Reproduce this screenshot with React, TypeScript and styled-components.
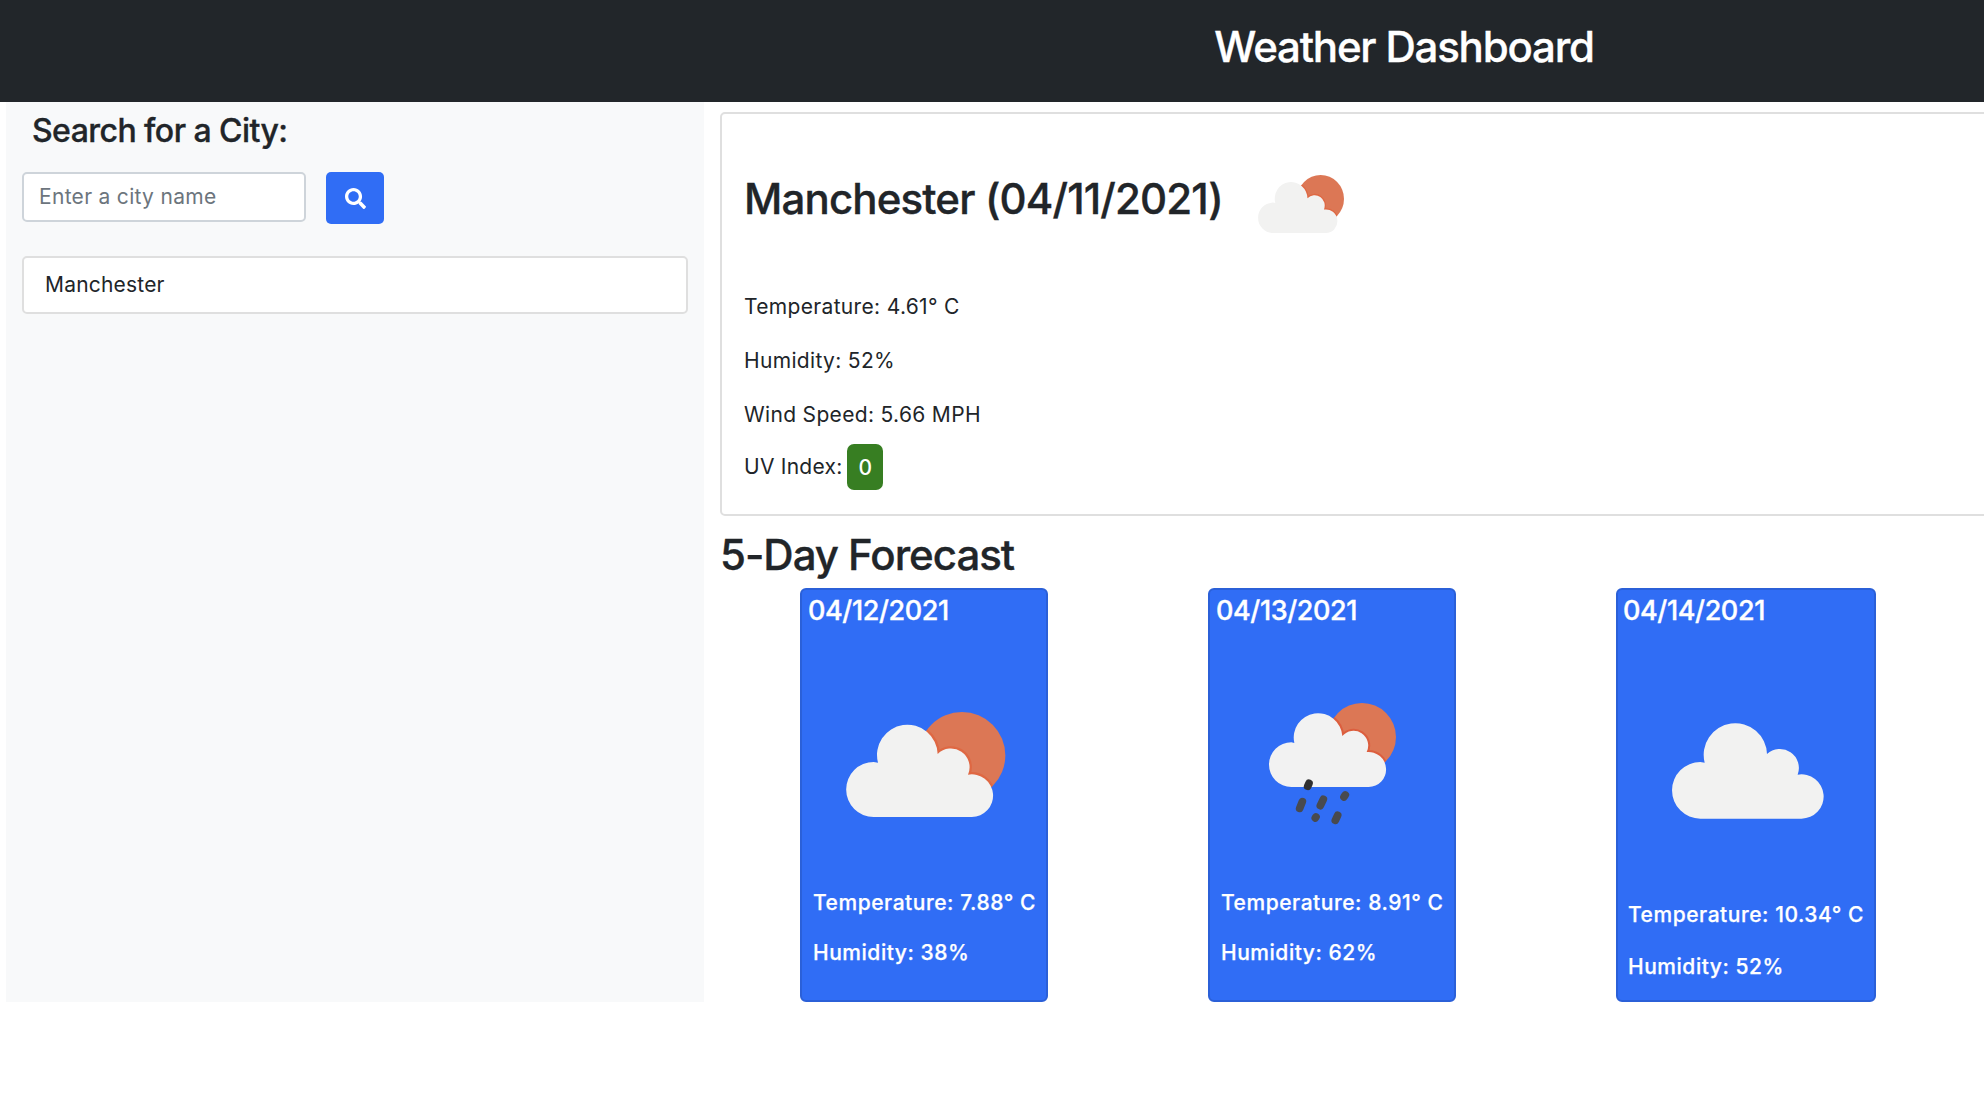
import React from "react";
import styled, { createGlobalStyle } from "styled-components";
import { FaSearch } from "react-icons/fa";

const GlobalStyle = createGlobalStyle`
  *, *::before, *::after { box-sizing: border-box; }
  html, body { margin: 0; background: #fff; overflow: hidden; }
  body {
    font-family: Inter, "Liberation Sans", sans-serif;
    font-size: 21px;
    color: #212529;
    white-space: nowrap;
  }
  h1, h2, h3, h4, p, ul { margin: 0; padding: 0; font-weight: 500; }
  h1, h2, h3 { -webkit-text-stroke: 0.35px currentColor; }
`;

const Page = styled.div`
  width: 100vw;
  height: 1108px;
  overflow: hidden;
  background: #fff;
`;

const Header = styled.header`
  width: 2808px;
  height: 102px;
  padding-top: 22px;
  text-align: center;
  background: #22262a;
  color: #fff;
`;

const PageTitle = styled.h1`
  font-size: 42px;
  line-height: 50px;
  letter-spacing: -1.2px;
`;

const Columns = styled.div`
  display: flex;
  width: 2808px;
  height: 900px;
  padding-left: 6px;
`;

const Sidebar = styled.aside`
  flex: none;
  width: 698px;
  padding: 9px 16px 0;
  background: #f8f9fa;
`;

const SearchTitle = styled.h2`
  padding-left: 10px;
  font-size: 32px;
  line-height: 40px;
  letter-spacing: -0.55px;
`;

const SearchForm = styled.form`
  display: flex;
  align-items: flex-start;
  gap: 20px;
  margin-top: 21px;
`;

const CityInput = styled.input`
  width: 284px;
  height: 50px;
  padding: 0 15px 2px;
  border: 2px solid #ced4da;
  border-radius: 5px;
  background: #fff;
  font: inherit;
  letter-spacing: 0.3px;
  outline: none;
  &::placeholder { color: #6c757d; opacity: 1; }
`;

const SearchButton = styled.button`
  display: flex;
  align-items: center;
  justify-content: center;
  width: 58px;
  height: 52px;
  padding: 0;
  border: 0;
  border-radius: 5px;
  background: #306df5;
  color: #fff;
  font-size: 21px;
`;

const History = styled.ul`
  margin-top: 32px;
  list-style: none;
`;

const HistoryItem = styled.li`
  height: 58px;
  padding-left: 21px;
  border: 2px solid #dfdfdf;
  border-radius: 5px;
  background: #fff;
  font-weight: 400;
  line-height: 53px;
  letter-spacing: 0.2px;
`;

const Main = styled.main`
  display: flex;
  flex-direction: column;
  flex: 1;
  min-width: 0;
  padding: 10px 48px 0 16px;
`;

const Today = styled.section`
  height: 404px;
  padding: 0 22px;
  border: 2px solid #dfdfdf;
  border-radius: 5px;
`;

const TodayHeading = styled.div`
  display: flex;
  align-items: flex-start;
  gap: 37px;
  padding-top: 60px;
  height: 171px;
  svg { margin-top: 1px; }
`;

const TodayTitle = styled.h2`
  width: 477px;
  font-size: 42px;
  line-height: 50px;
  letter-spacing: -0.85px;
`;

const Reading = styled.p`
  height: 54px;
  font-weight: 400;
  line-height: 44px;
  letter-spacing: 0.33px;
`;

const UvRow = styled.div`
  display: flex;
  gap: 5px;
  line-height: 44px;
  letter-spacing: 0.25px;
  margin-top: -2px;
`;

const UvBadge = styled.span`
  width: 36px;
  height: 46px;
  margin-top: -1px;
  border-radius: 7px;
  background: #377e22;
  color: #fff;
  font-weight: 500;
  line-height: 47px;
  text-align: center;
`;

const ForecastTitle = styled.h2`
  margin-top: 14px;
  font-size: 42px;
  line-height: 50px;
  letter-spacing: -1.02px;
`;

const Forecast = styled.div`
  display: grid;
  grid-template-columns: repeat(5, 408px);
  margin-top: 8px;
  padding-left: 80px;
`;

const DayCard = styled.article<{ $wide?: boolean }>`
  display: flex;
  flex-direction: column;
  width: ${(p) => (p.$wide ? 260 : 248)}px;
  height: 414px;
  padding-left: ${(p) => (p.$wide ? 4 : 5)}px;
  border: 2px solid #2b60d8;
  border-radius: 6px;
  background: #306df5;
  color: #fff;
`;

const DayDate = styled.h3`
  height: 38px;
  padding: 3px 0 0 1px;
  font-size: 27px;
  line-height: 36px;
  letter-spacing: -0.4px;
`;

const IconBox = styled.div<{ $top: number; $left: number; $height: number }>`
  height: ${(p) => p.$height}px;
  padding: ${(p) => p.$top}px 0 0 ${(p) => p.$left}px;
  svg { display: block; overflow: visible; }
`;

const DayReading = styled.p<{ $step: number }>`
  height: ${(p) => p.$step}px;
  padding-left: 6px;
  line-height: 34px;
  letter-spacing: 0.54px;
  -webkit-text-stroke: 0.25px currentColor;
`;

function SunCloud({ width, height, id }: { width: number; height: number; id: string }) {
  const cloud =
    "M280 740A82.5 82.5 0 0 1 280 575L293 577A91 91 0 1 1 472 551A56 56 0 0 1 563 613A64 64 0 1 1 574 740Z";
  return (
    <svg width={width} height={height} viewBox="197 425 478 315" preserveAspectRatio="none">
      <clipPath id={id}><circle cx="545" cy="555" r="130" /></clipPath>
      <circle cx="545" cy="555" r="130" fill="#dc7755" />
      <path d={cloud} fill="none" stroke="#e0623c" strokeWidth="14" opacity="0.7" clipPath={`url(#${id})`} />
      <path d={cloud} fill="#f2f2f1" />
    </svg>
  );
}

function RainCloud() {
  const cloud =
    "M303 650A67 67 0 0 1 303 516L312 518A73 73 0 1 1 456 497A44 44 0 0 1 529 545A52.65 52.65 0 1 1 535 650Z";
  return (
    <svg width="127.33" height="121.67" viewBox="236 398 382 365">
      <clipPath id="rain-sun"><circle cx="515" cy="500" r="102" /></clipPath>
      <circle cx="515" cy="500" r="102" fill="#dc7755" />
      <path d={cloud} fill="none" stroke="#dc5434" strokeWidth="12" opacity="0.7" clipPath="url(#rain-sun)" />
      <path d={cloud} fill="#f2f2f2" />
      <g stroke="#484a4f" strokeWidth="23" strokeLinecap="round">
        <path d="M356 639L352 648" stroke="#303030" />
        <path d="M336 694L328 714M399 687L390 706M465 674L461 680M377 740L375 743M442 735L435 750" />
      </g>
    </svg>
  );
}

function Cloud() {
  return (
    <svg width="151.33" height="94.67" viewBox="245 461 454 284">
      <path
        d="M330 745A85 85 0 0 1 330 575L343 577A95 95 0 1 1 530 551A57 57 0 0 1 622 613A66.5 66.5 0 1 1 633 745Z"
        fill="#f2f2f1"
      />
    </svg>
  );
}

export default function App() {
  return (
    <Page>
      <GlobalStyle />
      <Header>
        <PageTitle>Weather Dashboard</PageTitle>
      </Header>
      <Columns>
        <Sidebar>
          <SearchTitle>Search for a City:</SearchTitle>
          <SearchForm onSubmit={(e) => e.preventDefault()}>
            <CityInput placeholder="Enter a city name" />
            <SearchButton aria-label="Search"><FaSearch /></SearchButton>
          </SearchForm>
          <History>
            <HistoryItem>Manchester</HistoryItem>
          </History>
        </Sidebar>
        <Main>
          <Today>
            <TodayHeading>
              <TodayTitle>Manchester (04/11/2021)</TodayTitle>
              <SunCloud width={86} height={58} id="today-sun" />
            </TodayHeading>
            <Reading>Temperature: 4.61° C</Reading>
            <Reading>Humidity: 52%</Reading>
            <Reading>Wind Speed: 5.66 MPH</Reading>
            <UvRow>
              <span>UV Index:</span>
              <UvBadge>0</UvBadge>
            </UvRow>
          </Today>
          <ForecastTitle>5-Day Forecast</ForecastTitle>
          <Forecast>
            <DayCard>
              <DayDate>04/12/2021</DayDate>
              <IconBox $top={83.67} $left={38.67} $height={258}>
                <SunCloud width={159.33} height={105} id="day-sun" />
              </IconBox>
              <DayReading $step={50}>Temperature: 7.88° C</DayReading>
              <DayReading $step={50}>Humidity: 38%</DayReading>
            </DayCard>
            <DayCard>
              <DayDate>04/13/2021</DayDate>
              <IconBox $top={74.67} $left={53.67} $height={258}>
                <RainCloud />
              </IconBox>
              <DayReading $step={50}>Temperature: 8.91° C</DayReading>
              <DayReading $step={50}>Humidity: 62%</DayReading>
            </DayCard>
            <DayCard $wide>
              <DayDate>04/14/2021</DayDate>
              <IconBox $top={95.67} $left={49.67} $height={270}>
                <Cloud />
              </IconBox>
              <DayReading $step={52}>Temperature: 10.34° C</DayReading>
              <DayReading $step={50}>Humidity: 52%</DayReading>
            </DayCard>
          </Forecast>
        </Main>
      </Columns>
    </Page>
  );
}
